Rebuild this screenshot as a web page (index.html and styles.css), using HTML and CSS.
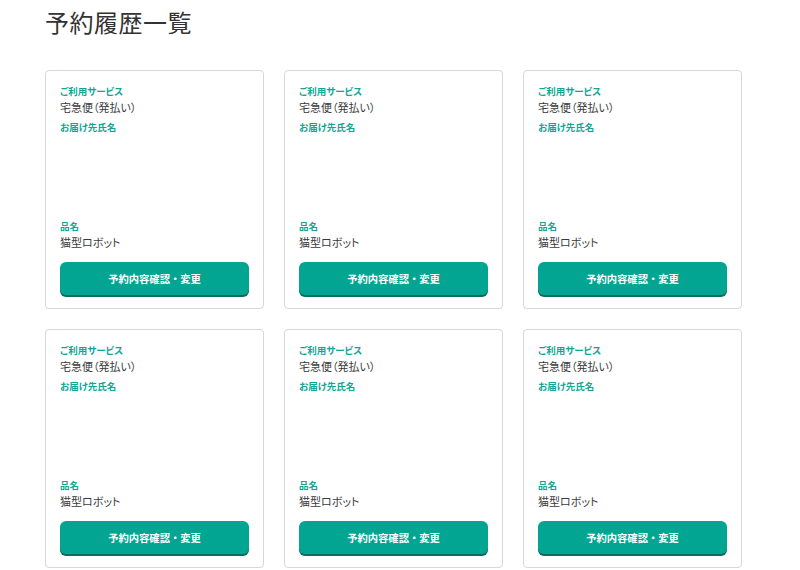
FILE: index.html
```html
<!DOCTYPE html>
<html lang="ja">
<head>
<meta charset="utf-8">
<link rel="stylesheet" href="styles.css">
</head>
<body>
<main class="page">
  <h1 class="title">予約履歴一覧</h1>
  <div class="grid">
    <section class="card">
      <div class="label">ご利用サービス</div>
      <div class="value">宅急便（発払い）</div>
      <div class="label label-gap">お届け先氏名</div>
      <div class="spacer"></div>
      <div class="label">品名</div>
      <div class="value">猫型ロボット</div>
      <button class="btn">予約内容確認・変更</button>
    </section>
    <section class="card">
      <div class="label">ご利用サービス</div>
      <div class="value">宅急便（発払い）</div>
      <div class="label label-gap">お届け先氏名</div>
      <div class="spacer"></div>
      <div class="label">品名</div>
      <div class="value">猫型ロボット</div>
      <button class="btn">予約内容確認・変更</button>
    </section>
    <section class="card">
      <div class="label">ご利用サービス</div>
      <div class="value">宅急便（発払い）</div>
      <div class="label label-gap">お届け先氏名</div>
      <div class="spacer"></div>
      <div class="label">品名</div>
      <div class="value">猫型ロボット</div>
      <button class="btn">予約内容確認・変更</button>
    </section>
    <section class="card">
      <div class="label">ご利用サービス</div>
      <div class="value">宅急便（発払い）</div>
      <div class="label label-gap">お届け先氏名</div>
      <div class="spacer"></div>
      <div class="label">品名</div>
      <div class="value">猫型ロボット</div>
      <button class="btn">予約内容確認・変更</button>
    </section>
    <section class="card">
      <div class="label">ご利用サービス</div>
      <div class="value">宅急便（発払い）</div>
      <div class="label label-gap">お届け先氏名</div>
      <div class="spacer"></div>
      <div class="label">品名</div>
      <div class="value">猫型ロボット</div>
      <button class="btn">予約内容確認・変更</button>
    </section>
    <section class="card">
      <div class="label">ご利用サービス</div>
      <div class="value">宅急便（発払い）</div>
      <div class="label label-gap">お届け先氏名</div>
      <div class="spacer"></div>
      <div class="label">品名</div>
      <div class="value">猫型ロボット</div>
      <button class="btn">予約内容確認・変更</button>
    </section>
  </div>
</main>
</body>
</html>
```
FILE: styles.css
```css
* { box-sizing: border-box; }
html, body { margin: 0; padding: 0; background: #fff; }
body {
  font-family: "Noto Sans CJK JP", "Noto Sans", sans-serif;
  color: #333;
  font-feature-settings: "palt";
}
.page {
  padding: 6px 0 0 45px;
  width: 745px;
}
.title {
  margin: 0;
  font-size: 24px;
  font-weight: 400;
  line-height: 32px;
  color: #333;
  letter-spacing: 0.5px;
}
.grid {
  margin-top: 32px;
  display: grid;
  grid-template-columns: repeat(3, 219px);
  column-gap: 20px;
  row-gap: 20px;
}
.card {
  height: 239px;
  border: 1px solid #d6d6dc;
  border-radius: 4px;
  padding: 13px 14px 13px 14px;
  display: flex;
  flex-direction: column;
}
.label {
  font-size: 9.5px;
  font-weight: 700;
  line-height: 14px;
  color: #12a594;
}
.label-gap { margin-top: 4px; }
.value {
  font-size: 11px;
  line-height: 18px;
  color: #3a3a3a;
}
.spacer { flex: 1; }
.btn {
  margin-top: 11px;
  height: 33px;
  width: 100%;
  border: none;
  border-radius: 6px;
  background: #01a591;
  box-shadow: 0 2px 0 #0d6b5f;
  color: #fff;
  font-family: inherit;
  font-feature-settings: normal;
  font-size: 10.3px;
  font-weight: 700;
  padding: 0;
}
```
